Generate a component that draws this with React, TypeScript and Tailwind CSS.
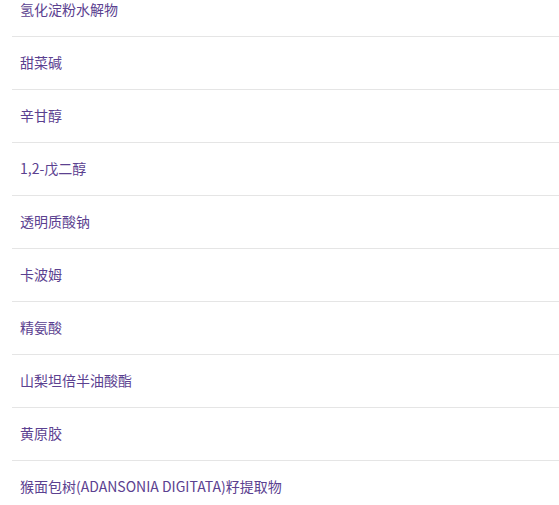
const items = [
  "氢化淀粉水解物",
  "甜菜碱",
  "辛甘醇",
  "1,2-戊二醇",
  "透明质酸钠",
  "卡波姆",
  "精氨酸",
  "山梨坦倍半油酸酯",
  "黄原胶",
  "猴面包树(ADANSONIA DIGITATA)籽提取物",
];

export default function App() {
  return (
    <div className="h-[505px] w-[559px] overflow-hidden bg-white">
      <ul
        className="ml-3 -mt-[16px]"
        style={{ fontFamily: '"Microsoft YaHei", "Noto Sans CJK SC", sans-serif' }}
      >
        {items.map((name) => (
          <li
            key={name}
            className="border-b border-[#e5e5e5] pt-[16px] pb-[18px] pl-2 text-[14px] leading-[18px] text-[#5b4190]"
          >
            {name}
          </li>
        ))}
      </ul>
    </div>
  );
}
